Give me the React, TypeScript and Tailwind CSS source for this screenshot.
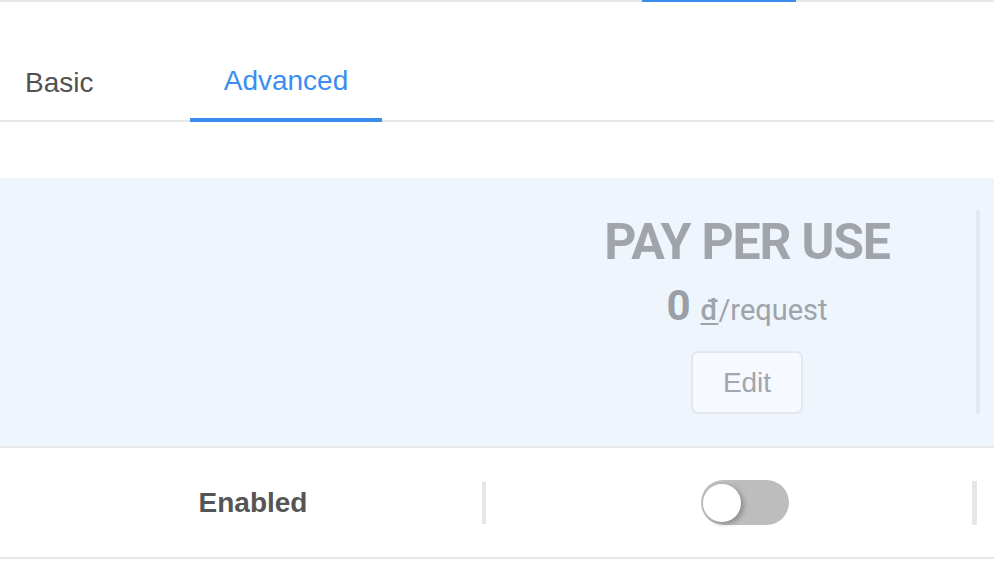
import React, { useState } from 'react';

const App = () => {
  const [tab, setTab] = useState<'basic' | 'advanced'>('advanced');
  const [enabled, setEnabled] = useState(false);

  return (
    <div className="w-[994px] h-[572px] bg-white overflow-hidden font-['Liberation_Sans',Arial,sans-serif]">
      {/* Parent tab strip (scrolled out of view) */}
      <div className="flex h-[2px] bg-[#e8e8e8]">
        <div className="w-[642px]" />
        <div className="w-[154px] bg-[#3b8ef0]" />
      </div>

      {/* Tabs */}
      <div className="flex h-[120px] border-b-2 border-[#e8e8e8]">
        <button
          onClick={() => setTab('basic')}
          className={`self-start h-[120px] w-[190px] pl-[25px] pt-[41px] text-left text-[28px] leading-[28px] ${
            tab === 'basic' ? 'text-[#3b8ef0] border-b-4 border-[#3b8ef0]' : 'text-[#525252]'
          }`}
        >
          Basic
        </button>
        <button
          onClick={() => setTab('advanced')}
          className={`self-start h-[120px] w-[192px] pt-[41px] text-center text-[28px] leading-[28px] ${
            tab === 'advanced' ? 'text-[#3b8ef0] border-b-4 border-[#3b8ef0]' : 'text-[#525252]'
          }`}
        >
          Advanced
        </button>
      </div>

      {/* Pricing panel */}
      <div className="mt-[56px] flex h-[270px] items-start bg-[#eef5fd] border-b-2 border-[#e6e8ec]">
        <div className="w-[518px]" />
        <div className="flex w-[458px] flex-col items-center pt-[39px]">
          <div className="font-['Roboto',sans-serif] text-[50px] leading-[50px] font-bold tracking-[-1.2px] text-[#a1a4ab]">
            PAY PER USE
          </div>
          <div className="mt-[19px] flex items-baseline font-['Roboto',sans-serif] text-[#a0a3aa]">
            <span className="text-[42px] leading-[40px] font-bold text-[#9b9ea5]">0</span>
            <span className="ml-[10px] text-[29px] leading-[40px] font-medium underline underline-offset-[3px] decoration-2">đ</span>
            <span className="text-[29px] leading-[40px]">/request</span>
          </div>
          <button className="mt-[21px] h-[63px] w-[112px] rounded-[7px] border-2 border-[#e4e7eb] bg-[#f6f9ff] text-[28px] text-[#a3a6ac]">
            Edit
          </button>
        </div>
        <div className="mt-[32px] h-[204px] w-[4px] bg-[#e6e8f0]" />
      </div>

      {/* Enabled row */}
      <div className="flex h-[111px] items-center border-b-2 border-[#e6e6ea]">
        <div className="w-[482px] pl-[24px] text-center text-[28px] font-bold text-[#555555]">
          Enabled
        </div>
        <div className="h-[42px] w-[4px] bg-[#e6e6ea]" />
        <div className="flex w-[486px] justify-center pl-[32px]">
          <button
            onClick={() => setEnabled(!enabled)}
            className={`flex h-[45px] w-[88px] items-center rounded-full px-[2px] ${
              enabled ? 'justify-end bg-[#3b8ef0]' : 'justify-start bg-[#bdbdbd]'
            }`}
          >
            <span className="h-[38px] w-[38px] rounded-full bg-white shadow-[3px_2px_5px_rgba(0,0,0,0.25)]" />
          </button>
        </div>
        <div className="h-[44px] w-[5px] bg-[#e6e6ea]" />
      </div>
    </div>
  );
};

export default App;
